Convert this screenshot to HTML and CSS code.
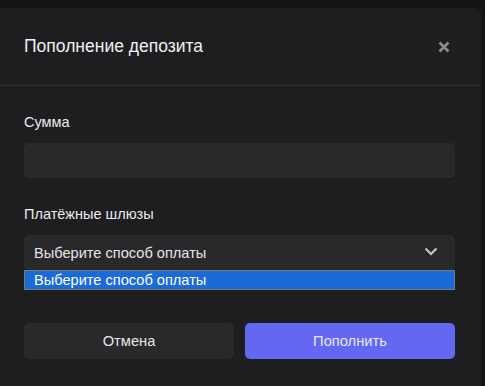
FILE: index.html
```html
<!DOCTYPE html>
<html lang="ru">
<head>
    <meta charset="UTF-8">
    <meta name="viewport" content="width=device-width, initial-scale=1.0">
    <title>Пополнение депозита</title>
    <link rel="stylesheet" href="styles.css">
</head>
<body>
    <div class="modal">
        <div class="modal-header">
            <h3>Пополнение депозита</h3>
            <button class="close" aria-label="Закрыть">
                <svg width="12" height="12" viewBox="0 0 12 12">
                    <path d="M1.5 1.5 L10.5 10.5 M10.5 1.5 L1.5 10.5" stroke="#8d8d8f" stroke-width="2.6" stroke-linecap="butt"/>
                </svg>
            </button>
        </div>

        <div class="modal-body">
            <div class="field">
                <label for="amount">Сумма</label>
                <input type="text" id="amount">
            </div>
            <div class="field">
                <label>Платёжные шлюзы</label>
                <div class="select">
                    <span>Выберите способ оплаты</span>
                    <svg class="chevron" width="14" height="9" viewBox="0 0 14 9">
                        <path d="M1.5 1.5 L7 7 L12.5 1.5" fill="none" stroke="#c4c4c6" stroke-width="2.2"/>
                    </svg>
                    <div class="options">
                        <div class="option selected">Выберите способ оплаты</div>
                    </div>
                </div>
            </div>
        </div>

        <div class="modal-footer">
            <button class="btn btn-cancel">Отмена</button>
            <button class="btn btn-primary">Пополнить</button>
        </div>
    </div>
</body>
</html>
```

FILE: styles.css
```css
body {
    font-family: Arial, "Liberation Sans", sans-serif;
    background-color: #141414;
    margin: 0;
    overflow: hidden;
}
.modal {
    width: 487px;
    margin: 8px 0 0 -6px;
    min-height: 400px;
    background: #1e1e20;
    border-radius: 6px;
    color: #ececee;
}
.modal-header {
    height: 77px;
    display: flex;
    align-items: center;
    justify-content: space-between;
    padding: 0 31px 0 30px;
    border-bottom: 1px solid #2f2f31;
}
.modal-header h3 {
    margin: 0;
    font-size: 17.5px;
    font-weight: normal;
    color: #f0f0f2;
}
.close {
    background: none;
    border: none;
    padding: 0;
    width: 12px;
    height: 12px;
    display: flex;
    cursor: pointer;
}
.modal-body {
    padding: 26px 26px 26px 30px;
    display: flex;
    flex-direction: column;
    gap: 26px;
}
.field {
    display: flex;
    flex-direction: column;
    gap: 11px;
}
.field label {
    font-size: 14.5px;
    line-height: 20px;
    color: #ececee;
}
.field input,
.select {
    box-sizing: border-box;
    width: 431px;
    height: 35px;
    background: #29292b;
    border: none;
    border-radius: 5px;
}
.select {
    position: relative;
    display: flex;
    align-items: center;
    justify-content: space-between;
    padding: 0 17px 0 10px;
    font-size: 14.6px;
    color: #e6e6e8;
}
.chevron {
    margin-top: -2px;
}
.options {
    position: absolute;
    top: 35px;
    left: 0;
    right: 0;
    border: 1px solid #7b7b7d;
    background: #29292b;
}
.option {
    height: 18px;
    line-height: 18px;
    padding: 0 9px;
    font-size: 14.6px;
}
.option.selected {
    background: #1a6ad8;
    color: #ffffff;
}
.modal-footer {
    display: flex;
    gap: 11px;
    padding: 27px 26px 26px 30px;
}
.btn {
    flex: 1;
    height: 36px;
    border: none;
    border-radius: 5px;
    font-family: inherit;
    font-size: 14.7px;
    cursor: pointer;
}
.btn-cancel {
    background: #29292b;
    color: #e6e6e8;
}
.btn-primary {
    background: #6467f0;
    color: #e8e8fc;
}
```
